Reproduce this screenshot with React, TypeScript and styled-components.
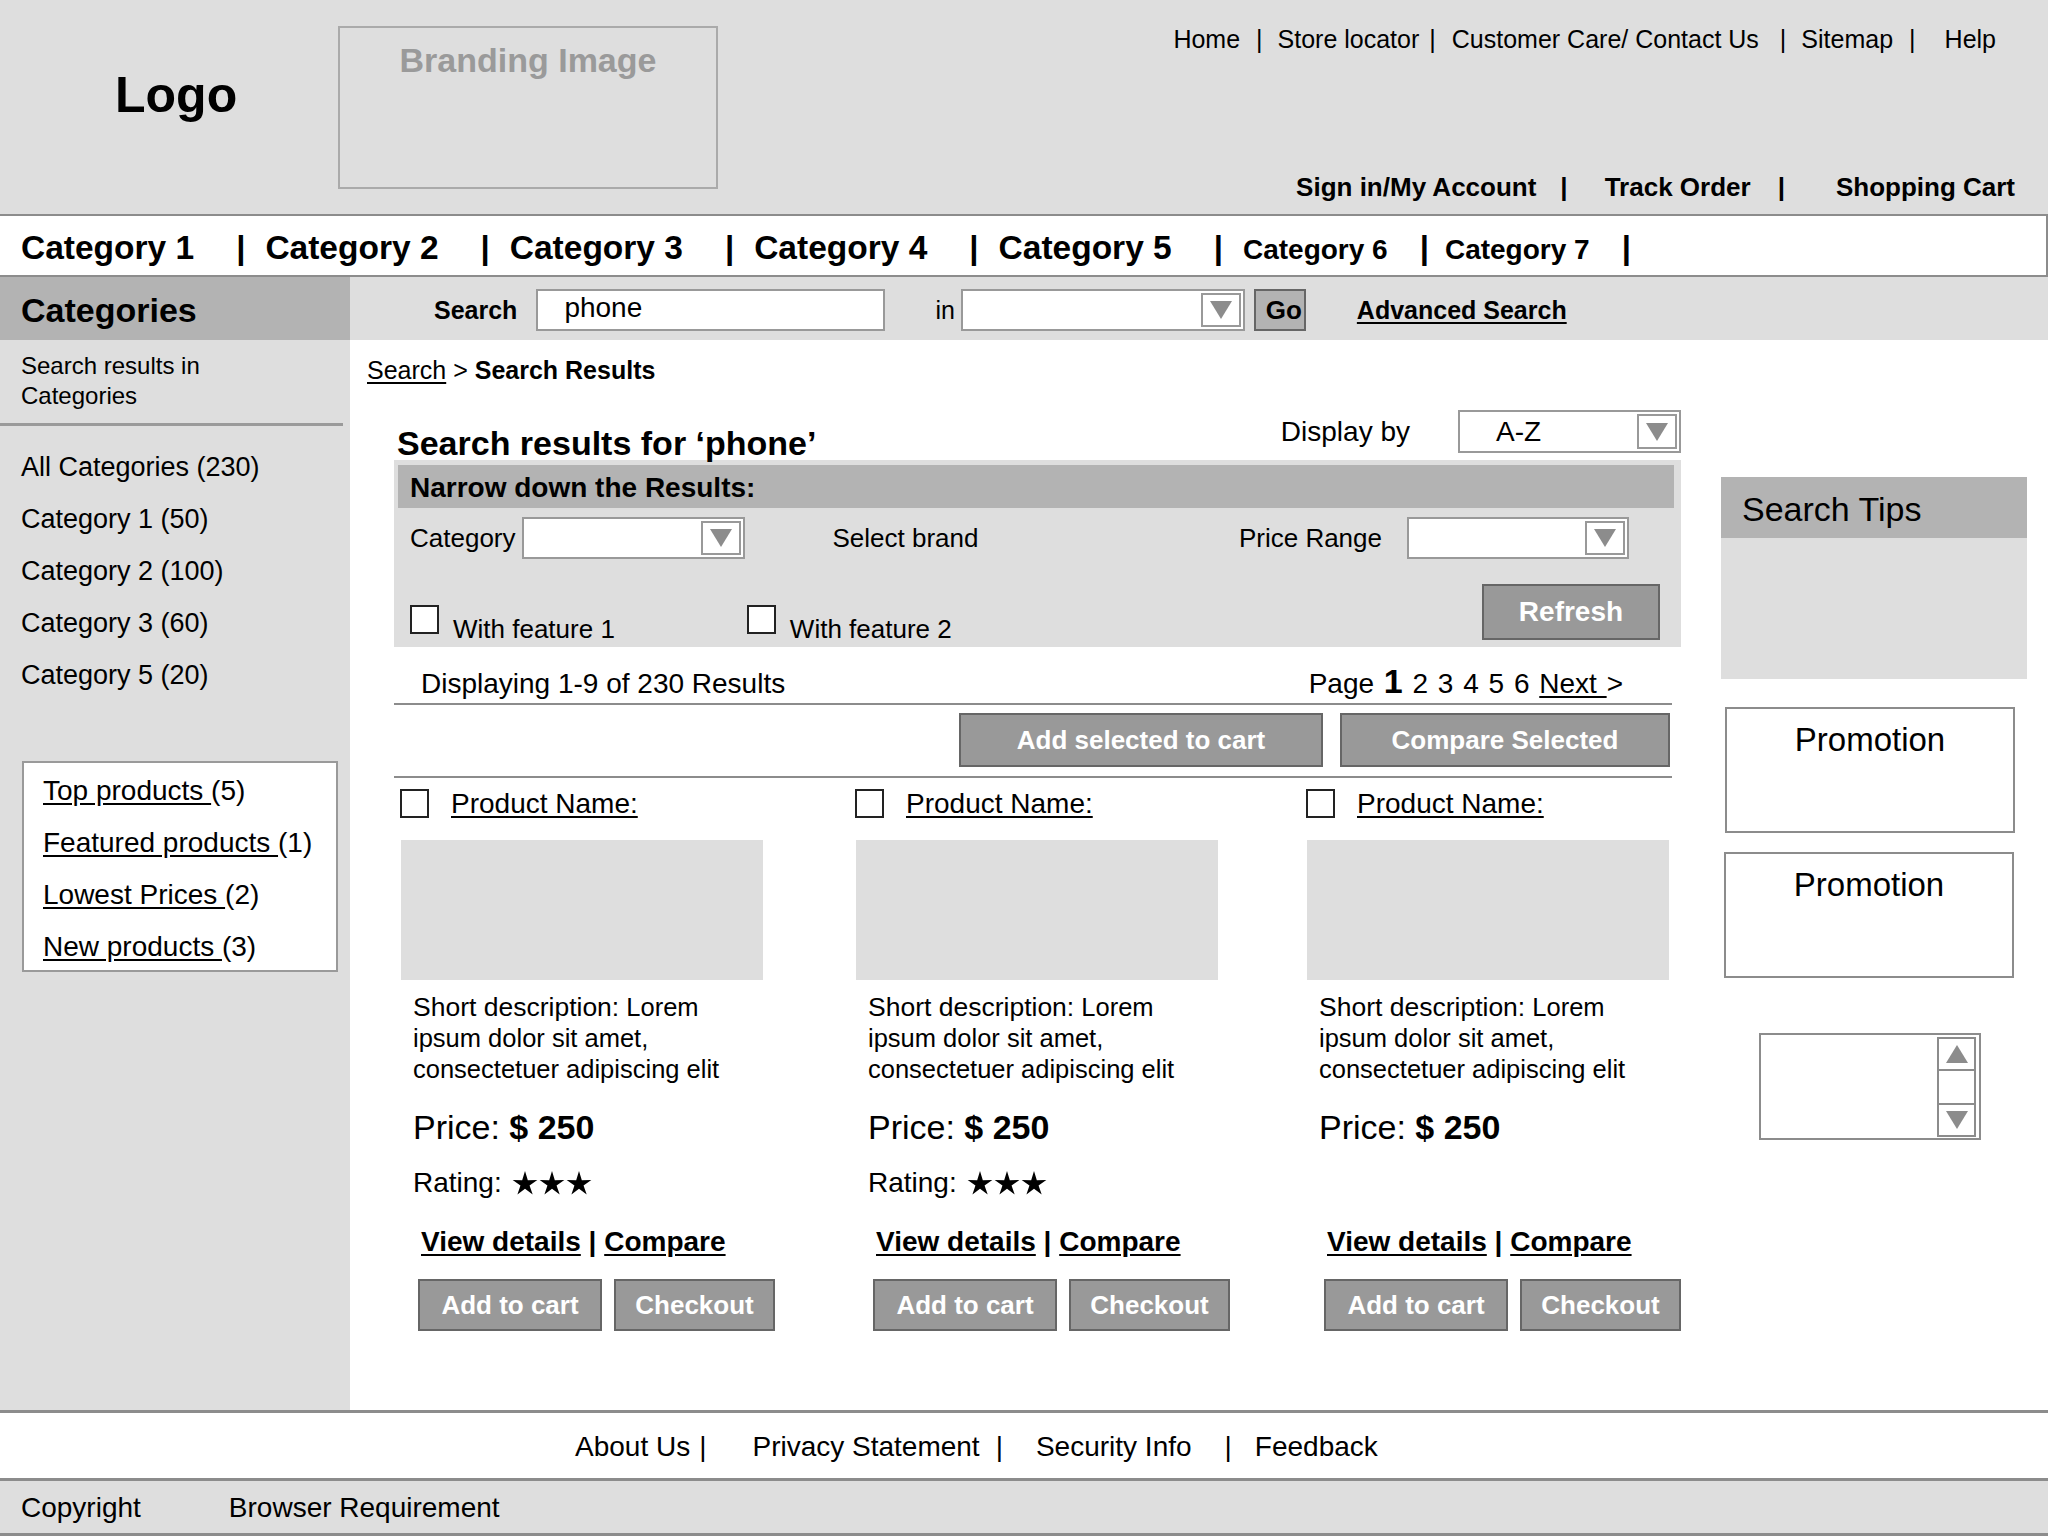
import styled, { createGlobalStyle } from "styled-components";

const GlobalStyle = createGlobalStyle`
  * {
    box-sizing: border-box;
  }
  html,
  body {
    margin: 0;
    padding: 0;
  }
  body {
    width: 2048px;
    height: 1536px;
    overflow: hidden;
    background: #ffffff;
    color: #000000;
    font-family: "Liberation Sans", Arial, sans-serif;
  }
  a {
    color: inherit;
  }
`;

const Page = styled.div`
  width: 2048px;
  height: 1536px;
  display: flex;
  flex-direction: column;
`;

/* ---------- header ---------- */

const Header = styled.header`
  height: 214px;
  background: #dedede;
  display: flex;
`;

const LogoArea = styled.div`
  width: 338px;
  padding: 70px 0 0 115px;
`;

const Logo = styled.div`
  font-size: 50px;
  line-height: 50px;
  font-weight: bold;
`;

const Branding = styled.div`
  margin-top: 26px;
  width: 380px;
  height: 163px;
  border: 2px solid #aaaaaa;
  padding-top: 15px;
  text-align: center;
  color: #9a9a9a;
  font-size: 34px;
  line-height: 34px;
  font-weight: bold;
`;

const HeaderRight = styled.div`
  flex: 1;
  display: flex;
  flex-direction: column;
  align-items: flex-end;
`;

const TopLinks = styled.nav`
  margin-top: 24px;
  padding-right: 52px;
  display: flex;
  font-size: 25px;
  line-height: 30px;
`;

const AccountLinks = styled.nav`
  margin-top: auto;
  margin-bottom: 12px;
  padding-right: 33px;
  display: flex;
  font-size: 26px;
  line-height: 30px;
  font-weight: bold;
`;

const Sep = styled.span<{ $l: number; $r: number }>`
  margin: 0 ${(p) => p.$r}px 0 ${(p) => p.$l}px;
`;

/* ---------- category nav ---------- */

const NavBar = styled.nav`
  height: 63px;
  background: #ffffff;
  border: 2px solid #8c8c8c;
  border-left: none;
  display: flex;
  align-items: center;
  padding: 4px 0 0 21px;
  font-weight: bold;
`;

const NavItem = styled.span<{ $small?: boolean }>`
  font-size: ${(p) => (p.$small ? 28 : 33.5)}px;
`;

const NavSep = styled.span<{ $small?: boolean }>`
  font-size: 33px;
  margin: 0 ${(p) => (p.$small ? 16 : 20)}px 0 ${(p) => (p.$small ? 32 : 42)}px;
`;

/* ---------- body ---------- */

const Body = styled.div`
  height: 1133px;
  display: flex;
`;

const Sidebar = styled.aside`
  width: 350px;
  background: #dedede;
`;

const SideHead = styled.div`
  height: 63px;
  background: #b3b3b3;
  display: flex;
  align-items: center;
  padding: 4px 0 0 21px;
  font-size: 34px;
  font-weight: bold;
`;

const SideIntro = styled.div`
  padding: 11px 0 0 21px;
  font-size: 24px;
  line-height: 30px;
`;

const SideDivider = styled.div`
  margin-top: 12px;
  width: 343px;
  height: 3px;
  background: #9a9a9a;
`;

const CatList = styled.ul`
  list-style: none;
  margin: 15px 0 0;
  padding: 0 0 0 21px;
  font-size: 27px;
  line-height: 52px;
`;

const PromoList = styled.ul`
  list-style: none;
  margin: 60px 0 0 22px;
  width: 316px;
  height: 211px;
  border: 2px solid #9a9a9a;
  background: #ffffff;
  padding: 2px 0 0 19px;
  font-size: 28px;
  line-height: 52px;
`;

const TextLink = styled.a`
  text-decoration: underline;
  text-underline-offset: 3px;
`;

const Main = styled.main`
  flex: 1;
  display: flex;
  flex-direction: column;
`;

const SearchBar = styled.div`
  height: 63px;
  background: #dedede;
  display: flex;
  align-items: center;
  padding: 3px 0 0 84px;
  font-size: 25px;
`;

const SearchLabel = styled.span`
  font-weight: bold;
`;

const SearchInput = styled.input`
  margin-left: 19px;
  width: 349px;
  height: 42px;
  border: 2px solid #999999;
  background: #ffffff;
  padding: 0 0 4px 26px;
  font-family: inherit;
  font-size: 28px;
  color: #000000;
  outline: none;
`;

const InLabel = styled.span`
  margin-left: 50px;
`;

const SelectBox = styled.div<{ $w: number; $h: number }>`
  width: ${(p) => p.$w}px;
  height: ${(p) => p.$h}px;
  flex: none;
  border: 2px solid #999999;
  background: #ffffff;
  padding: 2px;
  display: flex;
  align-items: center;
  justify-content: space-between;
  font-size: 28px;
`;

const SelectValue = styled.span`
  padding-left: 34px;
`;

const ArrowBox = styled.div`
  width: 40px;
  height: 100%;
  border: 2px solid #999999;
  background: #ffffff;
  display: flex;
  align-items: center;
  justify-content: center;
`;

const GoButton = styled.div`
  margin-left: 9px;
  width: 52px;
  height: 42px;
  background: #b3b3b3;
  border: 2px solid #666666;
  padding-left: 10px;
  display: flex;
  align-items: center;
  overflow: hidden;
  white-space: nowrap;
  font-weight: bold;
  font-size: 26px;
`;

const AdvancedLink = styled.a`
  margin-left: 51px;
  font-weight: bold;
  text-decoration: underline;
  text-underline-offset: 3px;
`;

const ContentRow = styled.div`
  flex: 1;
  display: flex;
`;

const Center = styled.section`
  width: 1350px;
  padding: 15px 0 0 44px;
`;

const Breadcrumb = styled.div`
  margin-left: -27px;
  font-size: 25px;
  line-height: 30px;
`;

const HeadingRow = styled.div`
  height: 75px;
  width: 1287px;
  display: flex;
  align-items: flex-end;
`;

const Heading = styled.h1`
  margin: 0 auto 0 3px;
  font-size: 34px;
  line-height: 34px;
  font-weight: bold;
`;

const DisplayBy = styled.span`
  font-size: 28px;
  line-height: 28px;
  margin-bottom: 14px;
`;

const Spaced = styled.div<{ $l: number; $b?: number; $r?: number; $auto?: boolean }>`
  margin: 0 ${(p) => p.$r ?? 0}px ${(p) => p.$b ?? 0}px ${(p) => (p.$auto ? "auto" : `${p.$l}px`)};
`;

const FilterPanel = styled.div`
  width: 1287px;
  height: 187px;
  background: #dedede;
  padding: 5px 7px 7px 4px;
  display: flex;
  flex-direction: column;
`;

const FilterHead = styled.div`
  height: 43px;
  background: #b3b3b3;
  display: flex;
  align-items: center;
  padding: 2px 0 0 12px;
  font-size: 28px;
  font-weight: bold;
`;

const FilterRow = styled.div`
  margin-top: 9px;
  height: 42px;
  display: flex;
  align-items: center;
  padding-left: 12px;
  font-size: 26px;
`;

const FeatureRow = styled.div`
  margin-top: auto;
  display: flex;
  align-items: flex-end;
  padding-left: 12px;
`;

const Feature = styled.label<{ $l?: number }>`
  margin: 0 0 -4px ${(p) => p.$l ?? 0}px;
  display: flex;
  align-items: flex-end;
  font-size: 26px;
  line-height: 30px;
`;

const Box = styled.div<{ $b?: number }>`
  width: 29px;
  height: 29px;
  flex: none;
  border: 2px solid #222222;
  background: #ffffff;
  margin-bottom: ${(p) => p.$b ?? 0}px;
`;

const FeatureText = styled.span`
  margin-left: 14px;
`;

const GrayButton = styled.button<{ $w: number; $h: number }>`
  width: ${(p) => p.$w}px;
  height: ${(p) => p.$h}px;
  flex: none;
  background: #999999;
  border: 2px solid #666666;
  color: #ffffff;
  font-family: inherit;
  font-weight: bold;
  font-size: 26px;
  padding: 0;
`;

const RefreshButton = styled(GrayButton)`
  margin: 0 14px 0 auto;
  font-size: 28px;
`;

const ResultsBar = styled.div`
  width: 1278px;
  height: 58px;
  border-bottom: 2px solid #8c8c8c;
  display: flex;
  align-items: flex-end;
  justify-content: space-between;
  padding: 0 49px 3px 27px;
  font-size: 28px;
  line-height: 32px;
`;

const Pager = styled.span`
  word-spacing: 2px;
`;

const PageNum = styled.b`
  font-size: 34px;
`;

const ActionRow = styled.div`
  width: 1278px;
  border-bottom: 2px solid #8c8c8c;
  display: flex;
  justify-content: flex-end;
  gap: 17px;
  padding: 8px 2px 9px 0;
`;

const ProductGrid = styled.div`
  display: grid;
  grid-template-columns: 455px 451px 1fr;
  padding-left: 6px;
`;

const Card = styled.article`
  display: flex;
  flex-direction: column;
`;

const CardHead = styled.div`
  margin-top: 11px;
  height: 29px;
  display: flex;
  align-items: center;
`;

const ProductName = styled.a`
  margin-left: 22px;
  font-size: 28px;
  line-height: 29px;
  text-decoration: underline;
  text-underline-offset: 3px;
`;

const ProductImage = styled.div`
  margin: 22px 0 0 1px;
  width: 362px;
  height: 140px;
  background: #dedede;
`;

const Desc = styled.div`
  margin: 12px 0 0 13px;
  font-size: 25.5px;
  line-height: 31px;
`;

const DescLine = styled.div`
  height: 31px;
  white-space: nowrap;
`;

const DescLead = styled.span`
  font-size: 26.5px;
`;

const Price = styled.div`
  margin: 22px 0 0 13px;
  font-size: 34px;
  line-height: 40px;
`;

const Rating = styled.div`
  margin: 18px 0 0 13px;
  height: 36px;
  display: flex;
  align-items: center;
  font-size: 28px;
`;

const Stars = styled.span`
  margin-left: 10px;
  display: flex;
  gap: 1px;
`;

const CardLinks = styled.div`
  margin: 24px 0 0 21px;
  font-size: 28px;
  line-height: 34px;
  font-weight: bold;
`;

const CardButtons = styled.div`
  margin: 20px 0 0 18px;
  display: flex;
  gap: 12px;
`;

/* ---------- right column ---------- */

const RightCol = styled.aside`
  margin-left: 21px;
  width: 306px;
  padding-top: 137px;
`;

const Tips = styled.div`
  height: 202px;
  background: #dedede;
`;

const TipsHead = styled.div`
  height: 61px;
  background: #b3b3b3;
  display: flex;
  align-items: center;
  padding: 3px 0 0 21px;
  font-size: 34px;
`;

const Promo = styled.div<{ $top: number; $l: number }>`
  margin: ${(p) => p.$top}px 0 0 ${(p) => p.$l}px;
  width: 290px;
  height: 126px;
  border: 2px solid #8c8c8c;
  background: #ffffff;
  padding-top: 12px;
  text-align: center;
  font-size: 33px;
  line-height: 38px;
`;

const ScrollBox = styled.div`
  margin: 55px 0 0 38px;
  width: 222px;
  height: 107px;
  border: 2px solid #8c8c8c;
  background: #ffffff;
  display: flex;
  justify-content: flex-end;
  padding: 2px 3px 1px;
`;

const ScrollTrack = styled.div`
  width: 39px;
  border: 2px solid #8c8c8c;
  display: flex;
  flex-direction: column;
`;

const ScrollBtn = styled.div`
  height: 30px;
  display: flex;
  align-items: center;
  justify-content: center;
`;

const ScrollMid = styled.div`
  flex: 1;
  border-top: 2px solid #8c8c8c;
  border-bottom: 2px solid #8c8c8c;
`;

/* ---------- footer ---------- */

const FooterLinks = styled.footer`
  height: 68px;
  border-top: 3px solid #8c8c8c;
  display: flex;
  align-items: center;
  padding: 3px 0 0 575px;
  font-size: 28px;
`;

const BottomBar = styled.div`
  height: 58px;
  background: #dedede;
  border-top: 3px solid #8c8c8c;
  border-bottom: 3px solid #8c8c8c;
  display: flex;
  align-items: center;
  padding: 2px 0 0 21px;
  font-size: 28px;
`;

const BottomItem = styled.span<{ $l?: number }>`
  margin-left: ${(p) => p.$l ?? 0}px;
`;

/* ---------- drawings ---------- */

function Triangle({ up }: { up?: boolean }) {
  return (
    <svg width="24" height="20" viewBox="0 0 24 20">
      <polygon points={up ? "12,1 23,19 1,19" : "1,1 23,1 12,19"} fill="#8c8c8c" />
    </svg>
  );
}

function Select({ w, h, value }: { w: number; h: number; value?: string }) {
  return (
    <SelectBox $w={w} $h={h}>
      <SelectValue>{value}</SelectValue>
      <ArrowBox>
        <Triangle />
      </ArrowBox>
    </SelectBox>
  );
}

function Star() {
  return (
    <svg width="26" height="26" viewBox="0 0 24 24">
      <polygon
        points="12,1 14.6,9.4 23.4,9.3 16.2,14.4 19.1,22.7 12,17.4 5,22.7 7.8,14.4 0.6,9.3 9.4,9.4"
        fill="#000"
      />
    </svg>
  );
}

const topLinks = [
  { label: "Home", sep: [16, 15] },
  { label: "Store locator", sep: [10, 16] },
  { label: "Customer Care/ Contact Us", sep: [21, 15] },
  { label: "Sitemap", sep: [16, 29] },
  { label: "Help" },
];

const accountLinks = [
  { label: "Sign in/My Account", sep: [24, 37] },
  { label: "Track Order", sep: [27, 51] },
  { label: "Shopping Cart" },
];

const navItems = [
  { label: "Category 1" },
  { label: "Category 2" },
  { label: "Category 3" },
  { label: "Category 4" },
  { label: "Category 5" },
  { label: "Category 6", small: true },
  { label: "Category 7", small: true },
];

const sideCats = [
  "All Categories (230)",
  "Category 1 (50)",
  "Category 2 (100)",
  "Category 3 (60)",
  "Category 5 (20)",
];

const sidePromos = [
  { link: "Top products ", count: "(5)" },
  { link: "Featured products ", count: "(1)" },
  { link: "Lowest Prices ", count: "(2)" },
  { link: "New products ", count: "(3)" },
];

const products = [{ rating: 3 }, { rating: 3 }, { rating: 0 }];

const footerLinks = [
  { label: "About Us", sep: [9, 46] },
  { label: "Privacy Statement", sep: [16, 33] },
  { label: "Security Info", sep: [33, 23] },
  { label: "Feedback" },
];

function LinkRow({ items }: { items: { label: string; sep?: number[] }[] }) {
  return (
    <>
      {items.map((item) => (
        <span key={item.label}>
          {item.label}
          {item.sep && (
            <Sep $l={item.sep[0]} $r={item.sep[1]}>
              |
            </Sep>
          )}
        </span>
      ))}
    </>
  );
}

export default function App() {
  return (
    <Page>
      <GlobalStyle />
      <Header>
        <LogoArea>
          <Logo>Logo</Logo>
        </LogoArea>
        <Branding>Branding Image</Branding>
        <HeaderRight>
          <TopLinks>
            <LinkRow items={topLinks} />
          </TopLinks>
          <AccountLinks>
            <LinkRow items={accountLinks} />
          </AccountLinks>
        </HeaderRight>
      </Header>

      <NavBar>
        {navItems.map((item) => (
          <span key={item.label}>
            <NavItem $small={item.small}>{item.label}</NavItem>
            <NavSep $small={item.small}>|</NavSep>
          </span>
        ))}
      </NavBar>

      <Body>
        <Sidebar>
          <SideHead>Categories</SideHead>
          <SideIntro>
            Search results in
            <br />
            Categories
          </SideIntro>
          <SideDivider />
          <CatList>
            {sideCats.map((c) => (
              <li key={c}>{c}</li>
            ))}
          </CatList>
          <PromoList>
            {sidePromos.map((p) => (
              <li key={p.link}>
                <TextLink href="#">{p.link}</TextLink>
                {p.count}
              </li>
            ))}
          </PromoList>
        </Sidebar>

        <Main>
          <SearchBar>
            <SearchLabel>Search</SearchLabel>
            <SearchInput readOnly value="phone" />
            <InLabel>in</InLabel>
            <Spaced $l={6}>
              <Select w={284} h={42} />
            </Spaced>
            <GoButton>Go</GoButton>
            <AdvancedLink href="#">Advanced Search</AdvancedLink>
          </SearchBar>

          <ContentRow>
            <Center>
              <Breadcrumb>
                <TextLink href="#">Search</TextLink> &gt; <b>Search Results</b>
              </Breadcrumb>

              <HeadingRow>
                <Heading>Search results for ‘phone’</Heading>
                <DisplayBy>Display by</DisplayBy>
                <Spaced $l={48} $b={7}>
                  <Select w={223} h={43} value="A-Z" />
                </Spaced>
              </HeadingRow>

              <FilterPanel>
                <FilterHead>Narrow down the Results:</FilterHead>
                <FilterRow>
                  <span>Category</span>
                  <Spaced $l={6}>
                    <Select w={223} h={42} />
                  </Spaced>
                  <Spaced $l={88}>Select brand</Spaced>
                  <Spaced $l={0} $auto>
                    Price Range
                  </Spaced>
                  <Spaced $l={25} $r={45}>
                    <Select w={222} h={42} />
                  </Spaced>
                </FilterRow>
                <FeatureRow>
                  <Feature>
                    <Box $b={10} />
                    <FeatureText>With feature 1</FeatureText>
                  </Feature>
                  <Feature $l={132}>
                    <Box $b={10} />
                    <FeatureText>With feature 2</FeatureText>
                  </Feature>
                  <RefreshButton $w={178} $h={56}>
                    Refresh
                  </RefreshButton>
                </FeatureRow>
              </FilterPanel>

              <ResultsBar>
                <span>Displaying 1-9 of 230 Results</span>
                <Pager>
                  Page <PageNum>1</PageNum> 2 3 4 5 6 <TextLink href="#">Next </TextLink>&gt;
                </Pager>
              </ResultsBar>

              <ActionRow>
                <GrayButton $w={364} $h={54}>
                  Add selected to cart
                </GrayButton>
                <GrayButton $w={330} $h={54}>
                  Compare Selected
                </GrayButton>
              </ActionRow>

              <ProductGrid>
                {products.map((p, i) => (
                  <Card key={i}>
                    <CardHead>
                      <Box />
                      <ProductName href="#">Product Name:</ProductName>
                    </CardHead>
                    <ProductImage />
                    <Desc>
                      <DescLine>
                        <DescLead>Short description:</DescLead> Lorem
                      </DescLine>
                      <DescLine>ipsum dolor sit amet,</DescLine>
                      <DescLine>consectetuer adipiscing elit</DescLine>
                    </Desc>
                    <Price>
                      Price: <b>$ 250</b>
                    </Price>
                    <Rating>
                      {p.rating > 0 && (
                        <>
                          Rating:
                          <Stars>
                            {Array.from({ length: p.rating }).map((_, s) => (
                              <Star key={s} />
                            ))}
                          </Stars>
                        </>
                      )}
                    </Rating>
                    <CardLinks>
                      <TextLink href="#">View details</TextLink> | <TextLink href="#">Compare</TextLink>
                    </CardLinks>
                    <CardButtons>
                      <GrayButton $w={184} $h={52}>
                        Add to cart
                      </GrayButton>
                      <GrayButton $w={161} $h={52}>
                        Checkout
                      </GrayButton>
                    </CardButtons>
                  </Card>
                ))}
              </ProductGrid>
            </Center>

            <RightCol>
              <Tips>
                <TipsHead>Search Tips</TipsHead>
              </Tips>
              <Promo $top={28} $l={4}>
                Promotion
              </Promo>
              <Promo $top={19} $l={3}>
                Promotion
              </Promo>
              <ScrollBox>
                <ScrollTrack>
                  <ScrollBtn>
                    <Triangle up />
                  </ScrollBtn>
                  <ScrollMid />
                  <ScrollBtn>
                    <Triangle />
                  </ScrollBtn>
                </ScrollTrack>
              </ScrollBox>
            </RightCol>
          </ContentRow>
        </Main>
      </Body>

      <FooterLinks>
        <LinkRow items={footerLinks} />
      </FooterLinks>
      <BottomBar>
        <BottomItem>Copyright</BottomItem>
        <BottomItem $l={88}>Browser Requirement</BottomItem>
      </BottomBar>
    </Page>
  );
}
